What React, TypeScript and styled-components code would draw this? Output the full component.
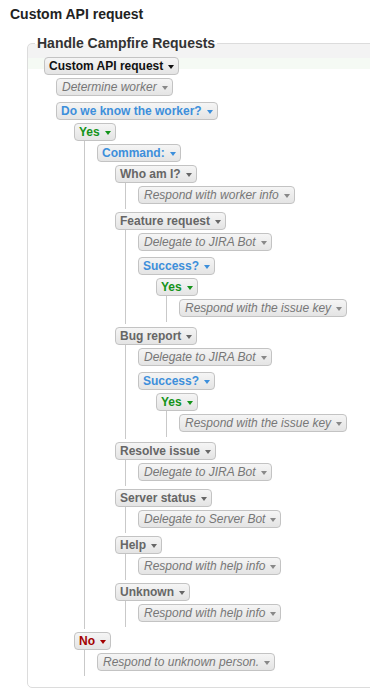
import React from "react";
import styled, { createGlobalStyle, css } from "styled-components";

type Kind = "root" | "action" | "question" | "yes" | "no" | "case";

interface TreeNode {
  label: string;
  kind: Kind;
  children?: TreeNode[];
}

const textColor: Record<Kind, string> = {
  root: "#111111",
  action: "#777777",
  question: "#3d8fdb",
  yes: "#14931a",
  no: "#a30000",
  case: "#666666",
};

const successBranch = (): TreeNode[] => [
  { label: "Delegate to JIRA Bot", kind: "action" },
  {
    label: "Success?",
    kind: "question",
    children: [
      {
        label: "Yes",
        kind: "yes",
        children: [{ label: "Respond with the issue key", kind: "action" }],
      },
    ],
  },
];

const tree: TreeNode = {
  label: "Custom API request",
  kind: "root",
  children: [
    { label: "Determine worker", kind: "action" },
    {
      label: "Do we know the worker?",
      kind: "question",
      children: [
        {
          label: "Yes",
          kind: "yes",
          children: [
            {
              label: "Command:",
              kind: "question",
              children: [
                {
                  label: "Who am I?",
                  kind: "case",
                  children: [{ label: "Respond with worker info", kind: "action" }],
                },
                { label: "Feature request", kind: "case", children: successBranch() },
                { label: "Bug report", kind: "case", children: successBranch() },
                {
                  label: "Resolve issue",
                  kind: "case",
                  children: [{ label: "Delegate to JIRA Bot", kind: "action" }],
                },
                {
                  label: "Server status",
                  kind: "case",
                  children: [{ label: "Delegate to Server Bot", kind: "action" }],
                },
                {
                  label: "Help",
                  kind: "case",
                  children: [{ label: "Respond with help info", kind: "action" }],
                },
                {
                  label: "Unknown",
                  kind: "case",
                  children: [{ label: "Respond with help info", kind: "action" }],
                },
              ],
            },
          ],
        },
        {
          label: "No",
          kind: "no",
          children: [{ label: "Respond to unknown person.", kind: "action" }],
        },
      ],
    },
  ],
};

const GlobalStyle = createGlobalStyle`
  html, body {
    margin: 0;
    padding: 0;
    background: #ffffff;
  }
  body {
    font-family: "Liberation Sans", Arial, Helvetica, sans-serif;
  }
`;

const Page = styled.div`
  width: 370px;
  height: 700px;
  overflow: hidden;
  box-sizing: border-box;
  padding: 6px 0 0 10px;
`;

const Title = styled.h1`
  margin: 0;
  font-size: 14px;
  line-height: 17px;
  font-weight: bold;
  color: #222222;
`;

const Panel = styled.fieldset`
  margin: 12px -40px 0 17px;
  padding: 3px 16px 11px 16px;
  min-width: 0;
  border: 1px solid #dcdcdc;
  border-radius: 5px;
  background: linear-gradient(
    to bottom,
    #f3f3f3 0px,
    #f3f3f3 14px,
    #f5faf4 14px,
    #f5faf4 25px,
    #ffffff 25px
  );
`;

const Legend = styled.legend`
  margin-left: -9px;
  padding: 0 2px;
  font-size: 14px;
  line-height: 16px;
  font-weight: bold;
  color: #333333;
`;

const Row = styled.div`
  display: flex;
  padding: 3px 0;
`;

const Pill = styled.span<{ $kind: Kind }>`
  display: inline-flex;
  align-items: center;
  gap: 5px;
  height: 18px;
  box-sizing: border-box;
  padding: 0 4px;
  border: 1px solid #c3c3c3;
  border-radius: 4px;
  background: linear-gradient(to bottom, #f5f5f5, #e4e4e4);
  font-size: 12px;
  line-height: 16px;
  font-weight: bold;
  font-style: normal;
  white-space: nowrap;
  color: ${(p) => textColor[p.$kind]};
  ${(p) =>
    p.$kind === "action" &&
    css`
      font-weight: normal;
      font-style: italic;
      padding: 0 4px 0 5px;
    `}
`;

const Caret = styled.span<{ $kind: Kind }>`
  width: 0;
  height: 0;
  margin-top: 2px;
  border-left: 3px solid transparent;
  border-right: 3px solid transparent;
  border-top: 4px solid
    ${(p) => (p.$kind === "action" ? "#888888" : textColor[p.$kind])};
`;

type Variant = "root" | "question" | "branch";

const Children = styled.div<{ $variant: Variant }>`
  margin-top: -3px;
  ${(p) =>
    p.$variant === "branch"
      ? css`
          margin-left: 10px;
          padding: 0 0 2px 12px;
          border-left: 1px solid #c9c9c9;
        `
      : css`
          margin-left: ${p.$variant === "root" ? 12 : 18}px;
        `}
`;

const variantOf = (kind: Kind): Variant =>
  kind === "root" ? "root" : kind === "question" ? "question" : "branch";

function Node({ node }: { node: TreeNode }) {
  return (
    <div>
      <Row>
        <Pill $kind={node.kind}>
          {node.label}
          <Caret $kind={node.kind} />
        </Pill>
      </Row>
      {node.children && node.children.length > 0 && (
        <Children $variant={variantOf(node.kind)}>
          {node.children.map((child, i) => (
            <Node key={i} node={child} />
          ))}
        </Children>
      )}
    </div>
  );
}

export default function App() {
  return (
    <>
      <GlobalStyle />
      <Page>
        <Title>Custom API request</Title>
        <Panel>
          <Legend>Handle Campfire Requests</Legend>
          <Node node={tree} />
        </Panel>
      </Page>
    </>
  );
}
